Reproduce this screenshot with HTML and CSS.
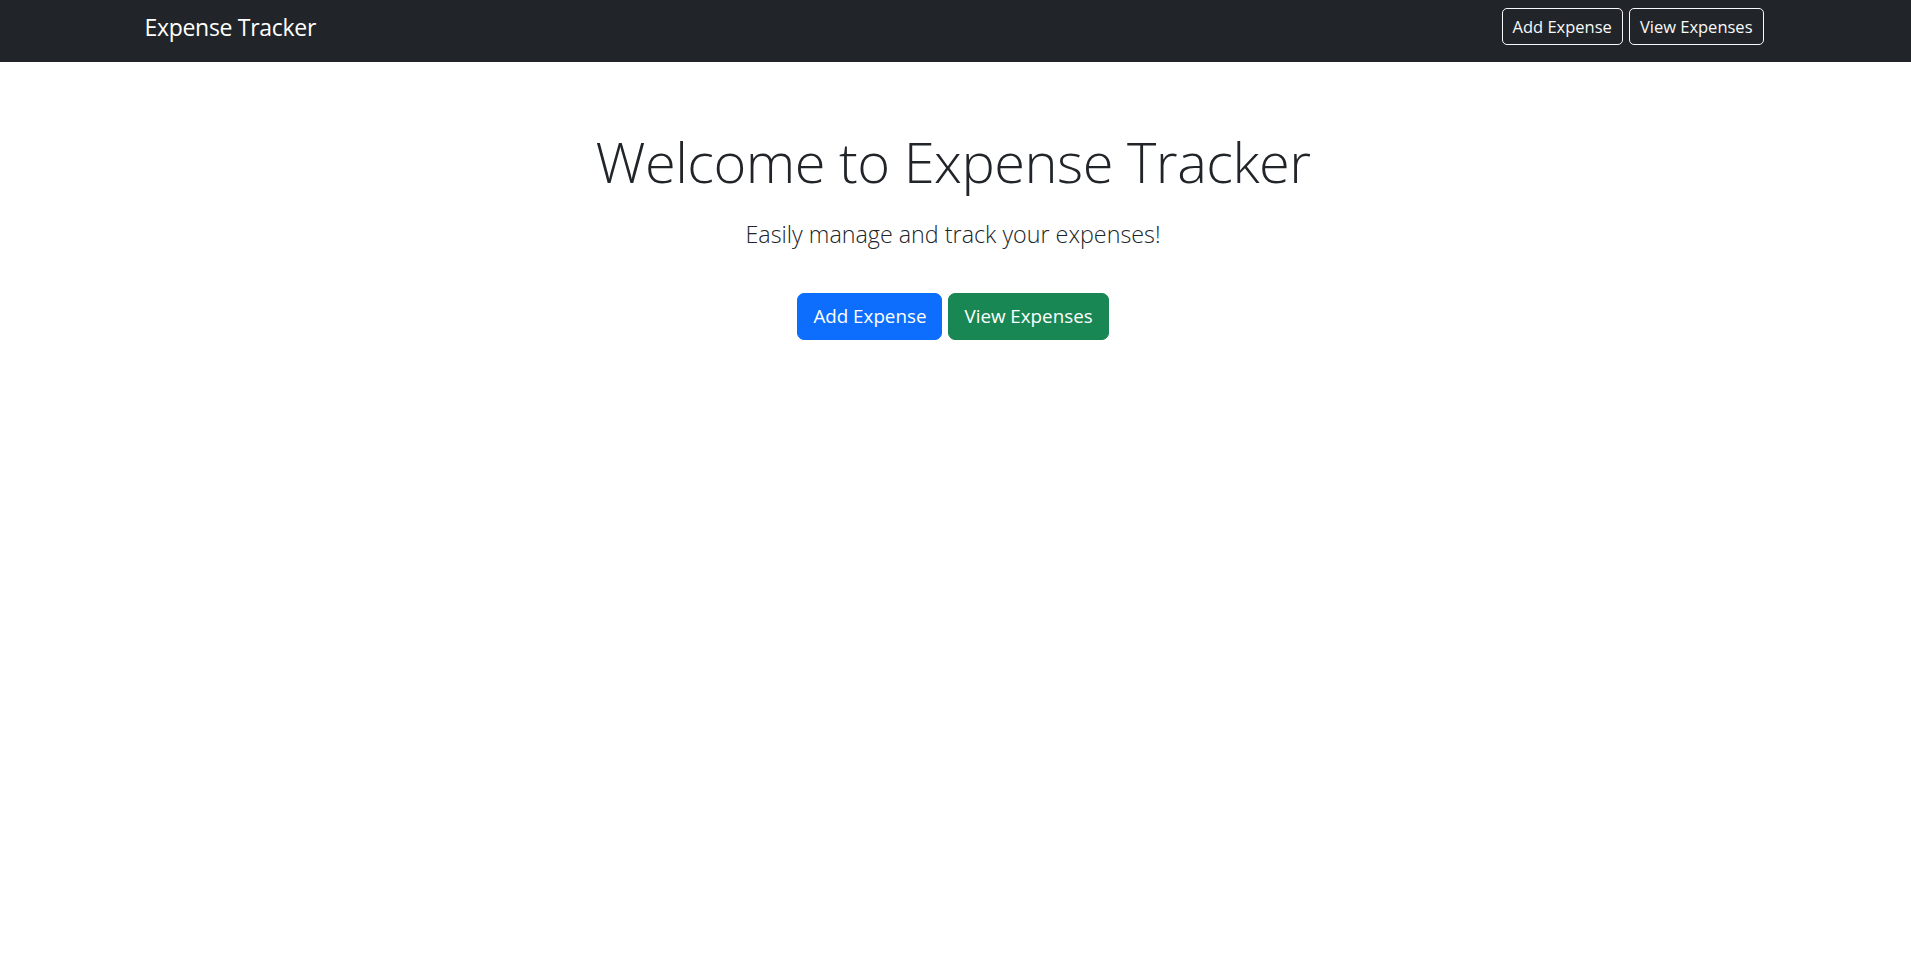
FILE: index.html
```html
<!DOCTYPE html>
<html lang="en">
<head>
<meta charset="utf-8">
<title>Expense Tracker</title>
<link rel="stylesheet" href="styles.css">
</head>
<body>
<nav class="navbar">
  <div class="container nav-inner">
    <a class="brand" href="#">Expense Tracker</a>
    <div class="nav-actions">
      <a class="btn btn-sm btn-outline-light" href="#">Add Expense</a>
      <a class="btn btn-sm btn-outline-light" href="#">View Expenses</a>
    </div>
  </div>
</nav>
<main class="container hero">
  <h1 class="display">Welcome to Expense Tracker</h1>
  <p class="lead">Easily manage and track your expenses!</p>
  <div class="hero-actions">
    <a class="btn btn-lgish btn-primary" href="#">Add Expense</a>
    <a class="btn btn-lgish btn-success" href="#">View Expenses</a>
  </div>
</main>
</body>
</html>
```
FILE: styles.css
```css
* { box-sizing: border-box; }
html, body {
  margin: 0;
  padding: 0;
  background: #fff;
  color: #212529;
  font-family: "Open Sans", "Noto Sans", sans-serif;
}
.container {
  max-width: 1650px;
  margin: 0 auto;
  padding: 0 15px;
}
.navbar {
  background: #212529;
  height: 62px;
}
.nav-inner {
  display: flex;
  justify-content: space-between;
  align-items: flex-start;
  padding-top: 8px;
  padding-right: 17px;
}
.brand {
  color: #fff;
  text-decoration: none;
  font-size: 23px;
  letter-spacing: -0.3px;
  line-height: 37px;
  margin-top: 1px;
  margin-left: -1px;
}
.nav-actions {
  display: flex;
  gap: 6px;
}
.btn {
  display: inline-block;
  text-decoration: none;
  text-align: center;
  border: 1px solid transparent;
}
.btn-sm {
  font-size: 16.5px;
  line-height: 26px;
  padding: 4.5px 10px;
  border-radius: 5px;
}
.btn-outline-light {
  color: #f8f9fa;
  border-color: #f8f9fa;
}
.hero {
  text-align: center;
  padding-top: 63px;
  padding-right: 20px;
}
.display {
  font-size: 56px;
  letter-spacing: -0.5px;
  font-weight: 300;
  line-height: 72px;
  margin: 0 0 19px;
}
.lead {
  font-size: 23.3px;
  font-weight: 300;
  line-height: 37.5px;
  margin: 0 0 39px;
}
.hero-actions {
  display: flex;
  justify-content: center;
  gap: 6px;
}
.btn-lgish {
  font-size: 18.8px;
  line-height: 30px;
  padding: 7.5px 15px;
  border-radius: 7px;
  color: #fff;
}
.btn-primary {
  background: #0d6efd;
  border-color: #0d6efd;
}
.btn-success {
  background: #198754;
  border-color: #198754;
}
```
